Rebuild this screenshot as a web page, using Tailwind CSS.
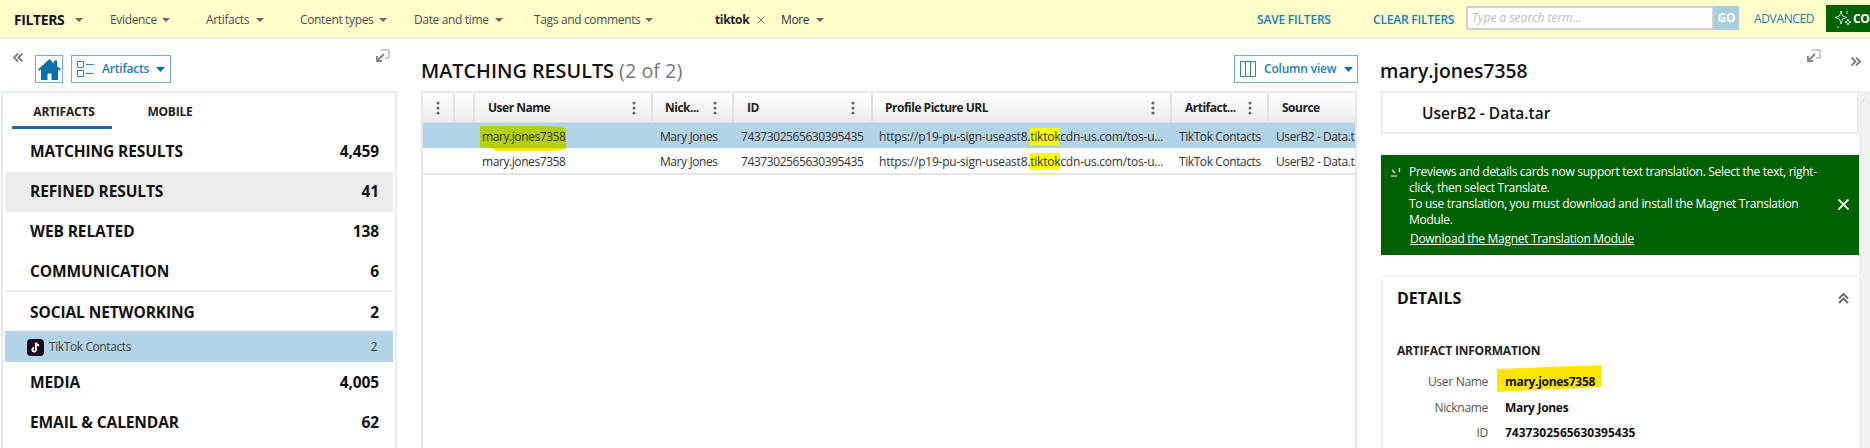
<!DOCTYPE html>
<html lang="en">
<head>
<meta charset="UTF-8">
<title>Matching results</title>
<script src="https://cdn.jsdelivr.net/npm/@tailwindcss/browser@4"></script>
</head>
<body class="bg-white w-[1870px] h-[448px] overflow-hidden font-['Open_Sans','Noto_Sans',sans-serif] text-[#1c1c1c]">

<!-- filter bar -->
<div class="h-[39px] pt-[2px] bg-[#ffffcc] border-b-2 border-[#eef0d8] flex items-center text-[12px] tracking-[-0.35px] text-[#4d4d4d] whitespace-nowrap">
    <span class="ml-[14px] w-[50px] shrink-0 font-bold text-[14px] tracking-[-0.4px] text-[#111]">FILTERS</span>
    <svg class="ml-[11px]" width="8" height="4" viewBox="0 0 8 4"><path d="M0 0h8L4 4z" fill="#666"/></svg>
    <span class="ml-[27px] w-[46px] shrink-0">Evidence</span>
    <svg class="ml-[6px]" width="8" height="4" viewBox="0 0 8 4"><path d="M0 0h8L4 4z" fill="#666"/></svg>
    <span class="ml-[36px] w-[44px] shrink-0">Artifacts</span>
    <svg class="ml-[6px]" width="8" height="4" viewBox="0 0 8 4"><path d="M0 0h8L4 4z" fill="#666"/></svg>
    <span class="ml-[36px] w-[73px] shrink-0">Content types</span>
    <svg class="ml-[6px]" width="8" height="4" viewBox="0 0 8 4"><path d="M0 0h8L4 4z" fill="#666"/></svg>
    <span class="ml-[27px] w-[75px] shrink-0">Date and time</span>
    <svg class="ml-[6px]" width="8" height="4" viewBox="0 0 8 4"><path d="M0 0h8L4 4z" fill="#666"/></svg>
    <span class="ml-[31px] w-[105px] shrink-0">Tags and comments</span>
    <svg class="ml-[6px]" width="8" height="4" viewBox="0 0 8 4"><path d="M0 0h8L4 4z" fill="#666"/></svg>
    <span class="ml-[62px] w-[33px] shrink-0 font-bold text-[#222]">tiktok</span>
    <svg class="ml-[9px]" width="8" height="8" viewBox="0 0 8 8"><path d="M.5.500l7 7M7.500.500l-7 7" stroke="#777" fill="none"/></svg>
    <span class="ml-[16px] w-[29px] shrink-0 text-[#333]">More</span>
    <svg class="ml-[6px]" width="8" height="4" viewBox="0 0 8 4"><path d="M0 0h8L4 4z" fill="#666"/></svg>
    <span class="ml-auto w-[75px] shrink-0 font-semibold tracking-[-0.2px] text-[#1b7db5]">SAVE FILTERS</span>
    <span class="ml-[41px] w-[83px] shrink-0 font-semibold tracking-[-0.2px] text-[#1b7db5]">CLEAR FILTERS</span>
    <div class="ml-[10px] flex h-[24px] -mt-[3px] tracking-normal">
        <div class="w-[248px] bg-white border-2 border-[#d0d0d0] pl-[4px] italic text-[#bdbdbd] leading-[20px]">Type a search term...</div>
        <div class="w-[25px] bg-[#aacfdc] text-white font-bold text-center leading-[24px]">GO</div>
    </div>
    <span class="ml-[15px] w-[61px] shrink-0 -mt-[2px] text-[#1b7db5]">ADVANCED</span>
    <div class="ml-[11px] w-[44px] h-[27px] -mt-[2px] bg-[#006100] flex items-center pl-[8px] gap-[1px] overflow-hidden">
        <svg class="shrink-0" width="18" height="20" viewBox="0 0 18 20" fill="none" stroke="#fff" stroke-width=".8"><path d="M7 2l1.500 5L13 8.500 8.500 10 7 15l-1.500-5L1 8.500 5.500 7zM14 10l.8 2.200 2.200.8-2.200.8L14 16l-.8-2.200L11 13l2.200-.8zM13 2v3M4 17v2"/></svg>
        <span class="text-white font-bold">CO</span>
    </div>
</div>

<div class="flex h-[409px]">
    <!-- left column -->
    <div class="w-[421px] shrink-0 relative">
        <svg class="absolute left-[13px] top-[14px]" width="10" height="9" viewBox="0 0 10 9" fill="none" stroke="#777" stroke-width="1.800"><path d="M5 .500 1 4.500l4 4M9.500.500l-4 4 4 4"/></svg>
        <svg class="absolute left-[376px] top-[10px]" width="14" height="13" viewBox="0 0 14 13" fill="none"><path d="M5 1h8v8H9" stroke="#999"/><path d="M8 5 2 11M1 7v5h5" stroke="#888" stroke-width="2"/></svg>
        <div class="flex gap-[8px] pt-[16px] pl-[35px] h-[52px]">
            <div class="w-[28px] h-[28px] border border-[#6fb1d6] flex items-center justify-center">
                <svg width="23" height="21" viewBox="0 0 23 21" fill="#0a70a8"><path d="M11.500 0 0 10.500l1.300 1.300L3 10.300V21h6.500v-6.500h4V21H20V10.300l1.700 1.500 1.300-1.300-4-3.600V1.500h-3v3z"/></svg>
            </div>
            <div class="w-[100px] h-[28px] border border-[#6fb1d6] flex items-center pl-[5px]">
                <svg width="17" height="16" viewBox="0 0 17 16" fill="none" stroke="#2c86bb"><path d="M.500.500h6v6h-6zM.500 9.500h6v6h-6zM9 3.500h8M9 12.500h8"/></svg>
                <span class="ml-[8px] w-[48px] text-[12px] font-semibold tracking-[-0.2px] text-[#1b7db5]">Artifacts</span>
                <svg class="ml-[6px]" width="9" height="5" viewBox="0 0 9 5"><path d="M0 0h9L4.500 5z" fill="#0a70a8"/></svg>
            </div>
        </div>
        <div class="ml-[1px] w-[396px] h-[357px] border-2 border-b-0 border-[#e4ecef] px-[2px]">
            <div class="flex h-[36px] pl-[7px] text-[12px] font-bold tracking-[-0.2px] text-[#222] mb-[3px]">
                <div class="w-[100px] pl-[4px] border-b-[3px] border-[#0a70a8] text-center leading-[38px]">ARTIFACTS</div>
                <div class="w-[116px] text-center leading-[38px]">MOBILE</div>
            </div>
            <div class="flex items-center justify-between h-[40px] pl-[25px] pr-[14px] text-[15.5px] font-bold tracking-[-0.1px] text-[#111]"><span>MATCHING RESULTS</span><span>4,459</span></div>
            <div class="flex items-center justify-between h-[40px] pl-[25px] pr-[14px] text-[15.5px] font-bold tracking-[-0.1px] text-[#111] bg-[#ededed]"><span>REFINED RESULTS</span><span>41</span></div>
            <div class="flex items-center justify-between h-[40px] pl-[25px] pr-[14px] text-[15.5px] font-bold tracking-[-0.1px] text-[#111]"><span>WEB RELATED</span><span>138</span></div>
            <div class="flex items-center justify-between h-[40px] pt-[2px] pl-[25px] pr-[14px] text-[15.5px] font-bold tracking-[-0.1px] text-[#111] border-b-2 border-[#ececec]"><span>COMMUNICATION</span><span>6</span></div>
            <div class="flex items-center justify-between h-[39px] pt-[2px] pl-[25px] pr-[14px] text-[15.5px] font-bold tracking-[-0.1px] text-[#111]"><span>SOCIAL NETWORKING</span><span>2</span></div>
            <div class="flex items-center h-[31px] pt-[1px] pl-[22px] pr-[16px] text-[12px] tracking-[-0.4px] text-[#444] bg-[#b3d3e7]">
                <svg width="17" height="17" viewBox="0 0 17 17"><rect width="17" height="17" rx="4" fill="#1a0a1e"/><path d="M9 3.500v7.200a1.800 1.800 0 1 1-1.800-1.800M9 3.500c.3 1.800 1.400 2.800 3.200 3" fill="none" stroke="#fff" stroke-width="1.800"/></svg>
                <span class="ml-[5px]">TikTok Contacts</span><span class="ml-auto">2</span>
            </div>
            <div class="flex items-center justify-between h-[40px] pt-[2px] pl-[25px] pr-[14px] text-[15.5px] font-bold tracking-[-0.1px] text-[#111]"><span>MEDIA</span><span>4,005</span></div>
            <div class="flex items-center justify-between h-[40px] pt-[2px] pl-[25px] pr-[14px] text-[15.5px] font-bold tracking-[-0.1px] text-[#111]"><span>EMAIL &amp; CALENDAR</span><span>62</span></div>
        </div>
    </div>

    <!-- results -->
    <div class="w-[936px] shrink-0">
        <div class="flex items-start justify-between h-[52px]">
            <div class="mt-[19px] text-[19.8px] leading-[26px] font-semibold text-[#111]">MATCHING RESULTS <span class="font-normal text-[#777]">(2 of 2)</span></div>
            <div class="mt-[16px] w-[124px] h-[28px] border border-[#6fb1d6] flex items-center pl-[5px] mr-[-1px]">
                <svg width="16" height="16" viewBox="0 0 16 16" fill="none" stroke="#2c86bb"><path d="M.500.500h15v15H.500zM5.500.500v15M10.500.500v15"/></svg>
                <span class="ml-[8px] w-[74px] text-[12px] font-semibold tracking-[-0.2px] whitespace-nowrap text-[#1b7db5]">Column view</span>
                <svg class="ml-[6px]" width="9" height="5" viewBox="0 0 9 5"><path d="M0 0h9L4.500 5z" fill="#0a70a8"/></svg>
            </div>
        </div>
        <div class="h-[357px] border-2 border-b-0 border-[#e4e8ea] text-[12px] text-[#333]">
            <div class="grid grid-cols-[32px_20px_178px_81px_139px_299px_97px_86px] h-[30px] pt-[1px] bg-gradient-to-b from-white to-[#ececec] font-bold tracking-[-0.5px] text-[#222] border-b border-[#ddd]">
                <div class="border-r-2 border-[#e2e2e2] flex items-center justify-center"><svg width="4" height="14" viewBox="0 0 4 14" fill="#666"><circle cx="2" cy="2" r="1.500"/><circle cx="2" cy="7" r="1.500"/><circle cx="2" cy="12" r="1.500"/></svg></div>
                <div class="border-r-2 border-[#e2e2e2]"></div>
                <div class="border-r-2 border-[#e2e2e2] flex items-center justify-between pl-[13px] pr-[15px]"><span>User Name</span><svg width="4" height="14" viewBox="0 0 4 14" fill="#666"><circle cx="2" cy="2" r="1.500"/><circle cx="2" cy="7" r="1.500"/><circle cx="2" cy="12" r="1.500"/></svg></div>
                <div class="border-r-2 border-[#e2e2e2] flex items-center justify-between pl-[12px] pr-[15px]"><span>Nick...</span><svg width="4" height="14" viewBox="0 0 4 14" fill="#666"><circle cx="2" cy="2" r="1.500"/><circle cx="2" cy="7" r="1.500"/><circle cx="2" cy="12" r="1.500"/></svg></div>
                <div class="border-r-2 border-[#e2e2e2] flex items-center justify-between pl-[13px] pr-[16px]"><span>ID</span><svg width="4" height="14" viewBox="0 0 4 14" fill="#666"><circle cx="2" cy="2" r="1.500"/><circle cx="2" cy="7" r="1.500"/><circle cx="2" cy="12" r="1.500"/></svg></div>
                <div class="border-r-2 border-[#e2e2e2] flex items-center justify-between pl-[12px] pr-[15px]"><span>Profile Picture URL</span><svg width="4" height="14" viewBox="0 0 4 14" fill="#666"><circle cx="2" cy="2" r="1.500"/><circle cx="2" cy="7" r="1.500"/><circle cx="2" cy="12" r="1.500"/></svg></div>
                <div class="border-r-2 border-[#e2e2e2] flex items-center justify-between pl-[13px] pr-[15px]"><span>Artifact...</span><svg width="4" height="14" viewBox="0 0 4 14" fill="#666"><circle cx="2" cy="2" r="1.500"/><circle cx="2" cy="7" r="1.500"/><circle cx="2" cy="12" r="1.500"/></svg></div>
                <div class="flex items-center pl-[13px]"><span>Source</span></div>
            </div>
            <div class="grid grid-cols-[32px_20px_178px_81px_139px_299px_97px_86px] h-[25px] pt-[3px] items-center bg-[#b3d3e7] whitespace-nowrap tracking-[-0.42px]">
                <div></div><div></div>
                <div class="relative pl-[7px]">
                    <svg class="absolute left-[5px] top-[-2px]" width="86" height="25" viewBox="0 0 86 25"><path d="M0 0h60q14 0 26 2v20H0z" fill="#b5d000"/><path d="M12 22h74v1q-10 2-16 2H16z" fill="#ffe600"/></svg>
                    <span class="relative">mary.jones7358</span>
                </div>
                <div class="pl-[7px]">Mary Jones</div>
                <div class="pl-[7px]">7437302565630395435</div>
                <div class="pl-[6px] overflow-hidden tracking-[-0.22px]">https://p19-pu-sign-useast8.<span class="bg-[#ffff00]">tiktok</span>cdn-us.com/tos-u...</div>
                <div class="pl-[7px]">TikTok Contacts</div>
                <div class="pl-[7px] overflow-hidden">UserB2 - Data.tar</div>
            </div>
            <div class="grid grid-cols-[32px_20px_178px_81px_139px_299px_97px_86px] h-[27px] pt-[3px] items-center bg-white border-b-2 border-[#e6e6e6] whitespace-nowrap tracking-[-0.42px]">
                <div></div><div></div>
                <div class="pl-[7px]">mary.jones7358</div>
                <div class="pl-[7px]">Mary Jones</div>
                <div class="pl-[7px]">7437302565630395435</div>
                <div class="pl-[6px] overflow-hidden tracking-[-0.22px]">https://p19-pu-sign-useast8.<span class="bg-[#ffff00]">tiktok</span>cdn-us.com/tos-u...</div>
                <div class="pl-[7px]">TikTok Contacts</div>
                <div class="pl-[7px] overflow-hidden">UserB2 - Data.tar</div>
            </div>
        </div>
    </div>

    <!-- details -->
    <div class="flex-1 relative pl-[24px]">
        <svg class="absolute left-[450px] top-[10px]" width="14" height="13" viewBox="0 0 14 13" fill="none"><path d="M5 1h8v8H9" stroke="#999"/><path d="M8 5 2 11M1 7v5h5" stroke="#888" stroke-width="2"/></svg>
        <svg class="absolute left-[494px] top-[18px]" width="10" height="9" viewBox="0 0 10 9" fill="none" stroke="#777" stroke-width="1.800"><path d="M.500.500l4 4-4 4M5 .500l4 4-4 4"/></svg>
        <div class="h-[52px] pt-[19px] text-[19.3px] leading-[26px] font-semibold text-[#111] -ml-[1px]">mary.jones7358</div>
        <div class="flex h-[357px] overflow-hidden">
            <div class="w-[478px] shrink-0">
                <div class="h-[43px] pt-[2px] border-2 border-[#e8eef0] pl-[39px] flex items-center text-[15.5px] font-semibold text-[#111]">UserB2 - Data.tar</div>
                <div class="mt-[21px] h-[100px] bg-[#006100] text-white text-[12px] tracking-[-0.3px] leading-[16px] pl-[28px] pr-[40px] pt-[9px] relative">
                    <svg class="absolute left-[10px] top-[13px]" width="10" height="9" viewBox="0 0 10 9" fill="none" stroke="#fff" stroke-width="1.200"><path d="M1 2l3 3M0 8h6M8.500 0v4"/></svg>
                    <svg class="absolute right-[10px] top-[44px]" width="11" height="11" viewBox="0 0 11 11" fill="none" stroke="#fff" stroke-width="1.800"><path d="M.500.500l10 10M10.500.500l-10 10"/></svg>
                    <p>Previews and details cards now support text translation. Select the text, right-click, then select Translate.</p>
                    <p>To use translation, you must download and install the Magnet Translation Module.</p>
                    <a class="block mt-[3px] ml-[1px] underline tracking-[-0.3px]">Download the Magnet Translation Module</a>
                </div>
                <div class="mt-[20px] h-[200px] border-t-2 border-l-2 border-[#f0f3f4] relative">
                    <div class="pl-[14px] pt-[10px] text-[16px] leading-[22px] font-bold text-[#111]">DETAILS</div>
                    <svg class="absolute right-[10px] top-[16px]" width="11" height="11" viewBox="0 0 11 11" fill="none" stroke="#666" stroke-width="1.800"><path d="M1 5.500l4.500-4.500 4.500 4.500M1 10l4.500-4.500L10 10"/></svg>
                    <div class="pl-[14px] mt-[33px] text-[12px] leading-[18px] font-bold tracking-[-0.2px] text-[#222]">ARTIFACT INFORMATION</div>
                    <div class="mt-[9px] text-[12px] leading-[18px]">
                        <div class="flex h-[26px] items-center"><span class="w-[105px] text-right tracking-[-0.3px] text-[#555]">User Name</span>
                            <span class="relative ml-[17px] font-bold tracking-[-0.3px] text-[#111]">
                                <svg class="absolute left-[-8px] top-[-8px]" width="104" height="28" viewBox="0 0 104 28"><path d="M0 4 104 0v22L0 27z" fill="#ffe600"/></svg>
                                <span class="relative">mary.jones7358</span>
                            </span>
                        </div>
                        <div class="flex h-[25px] items-center"><span class="w-[105px] text-right tracking-[-0.3px] text-[#555]">Nickname</span><span class="ml-[17px] font-bold tracking-[-0.3px] text-[#111]">Mary Jones</span></div>
                        <div class="flex h-[26px] items-center"><span class="w-[105px] text-right tracking-[-0.3px] text-[#555]">ID</span><span class="ml-[17px] font-bold text-[#111]">7437302565630395435</span></div>
                    </div>
                </div>
            </div>
            <div class="w-[11px] h-[357px] bg-[#f1f1f1] flex justify-center pt-[8px]">
                <svg width="7" height="4" viewBox="0 0 7 4" fill="none" stroke="#ccc"><path d="M.500 3.500l3-3 3 3"/></svg>
            </div>
        </div>
    </div>
</div>
</body>
</html>
